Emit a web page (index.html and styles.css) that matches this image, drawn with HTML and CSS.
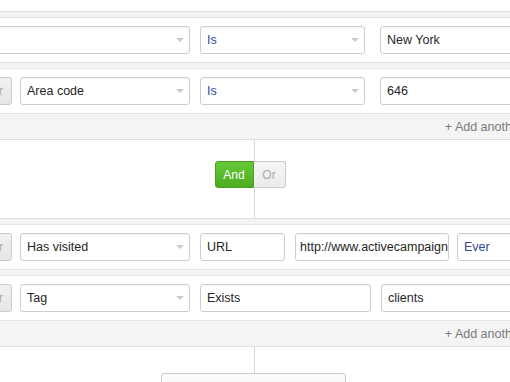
FILE: index.html
```html
<!DOCTYPE html>
<html>
<head>
<meta charset="utf-8">
<link rel="stylesheet" href="styles.css">
</head>
<body>
<div class="builder">
  <div class="group">
    <div class="group-top"></div>
    <div class="rows">
      <div class="row">
        <div class="field select w-first"><span class="val"></span><span class="caret"></span></div>
        <div class="field select w-op"><span class="val op">Is</span><span class="caret"></span></div>
        <div class="field input w-val push"><span class="val">New York</span></div>
      </div>
      <div class="row">
        <div class="join">Or</div>
        <div class="field select w-attr"><span class="val">Area code</span><span class="caret"></span></div>
        <div class="field select w-op"><span class="val op">Is</span><span class="caret"></span></div>
        <div class="field input w-val push"><span class="val">646</span></div>
      </div>
    </div>
    <div class="add-bar">+ Add another</div>
  </div>

  <div class="connector">
    <div class="toggle">
      <span class="tg tg-on">And</span><span class="tg tg-off">Or</span>
    </div>
  </div>

  <div class="group group-b">
    <div class="rows">
      <div class="row">
        <div class="join">Or</div>
        <div class="field select w-attr"><span class="val">Has visited</span><span class="caret"></span></div>
        <div class="field input w-url"><span class="val">URL</span></div>
        <div class="field input w-link"><span class="val">http://www.activecampaign</span></div>
        <div class="field select w-ever"><span class="val op">Ever</span><span class="caret"></span></div>
      </div>
      <div class="row">
        <div class="join">Or</div>
        <div class="field select w-attr"><span class="val">Tag</span><span class="caret"></span></div>
        <div class="field input w-exists"><span class="val">Exists</span></div>
        <div class="field input w-val"><span class="val">clients</span></div>
      </div>
    </div>
    <div class="add-bar">+ Add another</div>
  </div>

  <div class="tail">
    <div class="add-group">+ Add another group</div>
  </div>
</div>
</body>
</html>
```

FILE: styles.css
```css
html, body {
  margin: 0;
  padding: 0;
  background: #ffffff;
  overflow: hidden;
}

body {
  font-family: "Liberation Sans", Arial, Helvetica, sans-serif;
  font-size: 12.5px;
  color: #262626;
}

.builder {
  width: 567px;
  margin-left: -30px;
}

.group {
  background: #f4f4f4;
  border-bottom: 1px solid #dedede;
}

.group-b {
  border-top: 1px solid #dedede;
}

.group-top {
  height: 11px;
  background: #ffffff;
  border-bottom: 1px solid #e0e0e0;
}

.rows {
  display: flex;
  flex-direction: column;
  gap: 5px;
  padding-top: 5px;
}

.row {
  display: flex;
  align-items: center;
  gap: 10px;
  height: 46px;
  box-sizing: border-box;
  padding: 8px 10px;
  background: #ffffff;
  border-top: 1px solid #e3e3e3;
  border-bottom: 1px solid #e3e3e3;
}

.join {
  flex: none;
  width: 32px;
  height: 28px;
  box-sizing: border-box;
  margin-right: -2px;
  border: 1px solid #cbcbcb;
  border-radius: 3px;
  background: linear-gradient(#f1f1f1, #e6e6e6);
  color: #a8a8a8;
  display: flex;
  align-items: center;
  justify-content: center;
}

.field {
  flex: none;
  height: 28px;
  box-sizing: border-box;
  border: 1px solid #cdcdcd;
  border-radius: 3px;
  background: #ffffff;
  box-shadow: inset 0 1px 1px rgba(0, 0, 0, 0.04);
  display: flex;
  align-items: center;
  padding: 0 5px 0 6px;
  white-space: nowrap;
  overflow: hidden;
}

.val {
  flex: 1;
  overflow: hidden;
}

.op {
  color: #33489b;
}

.caret {
  flex: none;
  width: 0;
  height: 0;
  border-left: 4px solid transparent;
  border-right: 4px solid transparent;
  border-top: 4px solid #cbcbcb;
  margin-left: 4px;
}

.w-first { width: 210px; }
.w-attr { width: 170px; }
.w-op { width: 165px; }
.w-val { width: 180px; }
.w-url { width: 85px; }
.w-link { width: 154px; padding: 0 0 0 4px; }
.w-ever { width: 120px; margin-left: -2px; }
.w-exists { width: 171px; }
.push { margin-left: 5px; }

.add-bar {
  height: 25px;
  display: flex;
  align-items: center;
  justify-content: flex-end;
  padding-right: 14px;
  color: #7a7a7a;
  font-size: 12.5px;
  white-space: nowrap;
}

.connector {
  position: relative;
  height: 78px;
  box-sizing: border-box;
  padding-top: 21px;
  background: #ffffff;
  display: flex;
  justify-content: center;
  align-items: flex-start;
}

.connector::before,
.tail::before {
  content: "";
  position: absolute;
  left: 50%;
  top: 0;
  width: 1px;
  background: #d9d9d9;
}

.connector::before {
  bottom: 0;
}

.toggle {
  position: relative;
  display: flex;
  margin-right: 7px;
  font-size: 12px;
}

.tg {
  height: 27px;
  box-sizing: border-box;
  display: flex;
  align-items: center;
  justify-content: center;
}

.tg-on {
  width: 39px;
  background: linear-gradient(#66c93a, #4cae1f);
  border: 1px solid #4a9f22;
  border-radius: 3px 0 0 3px;
  color: #ffffff;
}

.tg-off {
  width: 32px;
  background: linear-gradient(#f5f5f5, #ebebeb);
  border: 1px solid #cacaca;
  border-left: none;
  border-radius: 0 3px 3px 0;
  color: #aaaaaa;
}

.tail {
  position: relative;
  height: 60px;
  box-sizing: border-box;
  padding-top: 26px;
  display: flex;
  justify-content: center;
  align-items: flex-start;
}

.tail::before {
  height: 26px;
}

.add-group {
  width: 185px;
  height: 30px;
  box-sizing: border-box;
  border: 1px solid #cbcbcb;
  border-radius: 3px;
  background: linear-gradient(#fbfbfb, #f0f0f0);
  color: #666666;
  display: flex;
  align-items: center;
  justify-content: center;
}
```
